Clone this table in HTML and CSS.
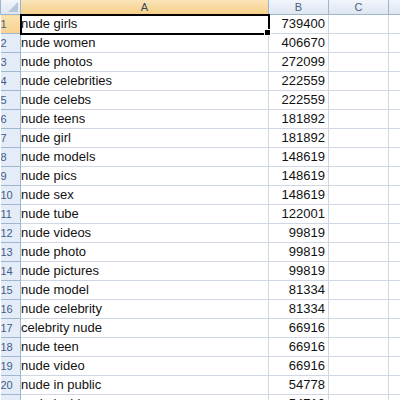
FILE: index.html
```html
<!DOCTYPE html>
<html lang="en">
<head>
  <meta charset="UTF-8" />
  <title>Sheet1</title>
  <link rel="stylesheet" href="styles.css">
</head>
<body>
  <table class="sheet">
    <colgroup>
      <col class="col-head">
      <col class="col-a">
      <col class="col-b">
      <col class="col-c">
      <col class="col-d">
    </colgroup>
    <thead>
      <tr>
        <th class="corner"><span class="tri"></span></th>
        <th class="sel">A</th>
        <th>B</th>
        <th>C</th>
        <th></th>
      </tr>
    </thead>
    <tbody>
      <tr><th class="sel">1</th><td class="active">nude girls<span class="handle"></span></td><td class="num">739400</td><td></td><td></td></tr>
      <tr><th>2</th><td>nude women</td><td class="num">406670</td><td></td><td></td></tr>
      <tr><th>3</th><td>nude photos</td><td class="num">272099</td><td></td><td></td></tr>
      <tr><th>4</th><td>nude celebrities</td><td class="num">222559</td><td></td><td></td></tr>
      <tr><th>5</th><td>nude celebs</td><td class="num">222559</td><td></td><td></td></tr>
      <tr><th>6</th><td>nude teens</td><td class="num">181892</td><td></td><td></td></tr>
      <tr><th>7</th><td>nude girl</td><td class="num">181892</td><td></td><td></td></tr>
      <tr><th>8</th><td>nude models</td><td class="num">148619</td><td></td><td></td></tr>
      <tr><th>9</th><td>nude pics</td><td class="num">148619</td><td></td><td></td></tr>
      <tr><th>10</th><td>nude sex</td><td class="num">148619</td><td></td><td></td></tr>
      <tr><th>11</th><td>nude tube</td><td class="num">122001</td><td></td><td></td></tr>
      <tr><th>12</th><td>nude videos</td><td class="num">99819</td><td></td><td></td></tr>
      <tr><th>13</th><td>nude photo</td><td class="num">99819</td><td></td><td></td></tr>
      <tr><th>14</th><td>nude pictures</td><td class="num">99819</td><td></td><td></td></tr>
      <tr><th>15</th><td>nude model</td><td class="num">81334</td><td></td><td></td></tr>
      <tr><th>16</th><td>nude celebrity</td><td class="num">81334</td><td></td><td></td></tr>
      <tr><th>17</th><td>celebrity nude</td><td class="num">66916</td><td></td><td></td></tr>
      <tr><th>18</th><td>nude teen</td><td class="num">66916</td><td></td><td></td></tr>
      <tr><th>19</th><td>nude video</td><td class="num">66916</td><td></td><td></td></tr>
      <tr><th>20</th><td>nude in public</td><td class="num">54778</td><td></td><td></td></tr>
      <tr><th>21</th><td>nude lesbian</td><td class="num">54710</td><td></td><td></td></tr>
    </tbody>
  </table>
</body>
</html>
```

FILE: styles.css
```css
body {
  margin: 0;
  padding: 0;
  overflow: hidden;
  background: #fff;
  font-family: 'Liberation Sans', Arial, sans-serif;
}

.sheet {
  border-collapse: collapse;
  table-layout: fixed;
  width: 440px;
}

.col-head { width: 20px; }
.col-a { width: 248px; }
.col-b { width: 60px; }
.col-c { width: 60px; }
.col-d { width: 52px; }

.sheet th,
.sheet td {
  padding: 0;
  white-space: nowrap;
  overflow: hidden;
}

thead th {
  height: 14px;
  font-size: 11px;
  font-weight: normal;
  color: #4c5f7c;
  text-align: center;
  background: linear-gradient(#f1f5fb, #dde6f1);
  border: 1px solid #9eb6ce;
  border-top: none;
  line-height: 14px;
}

thead th.sel {
  background: linear-gradient(#fbe4b8, #f6cf87);
  color: #3b4a60;
}

.corner {
  position: relative;
}

.corner .tri {
  position: absolute;
  right: 2px;
  bottom: 2px;
  width: 0;
  height: 0;
  border-left: 10px solid transparent;
  border-bottom: 10px solid #b7c6d9;
}

tbody th {
  height: 18px;
  font-size: 11px;
  font-weight: normal;
  color: #3f5d86;
  text-align: left;
  padding-left: 2px;
  background: #e4ecf7;
  border: 1px solid #9eb6ce;
  border-left: none;
}

tbody th.sel {
  background: linear-gradient(#fbe1ae, #f7d391);
}

tbody td {
  height: 18px;
  font-size: 13px;
  color: #111;
  border: 1px solid #d0d7e5;
  padding-left: 2px;
  line-height: 18px;
}

tbody td.num {
  text-align: right;
  padding-right: 3px;
}

td.active {
  position: relative;
  overflow: visible;
  outline: 2px solid #000;
  outline-offset: -1px;
}

.handle {
  position: absolute;
  right: -3px;
  bottom: -3px;
  width: 5px;
  height: 5px;
  background: #000;
  border: 1px solid #fff;
}
```
